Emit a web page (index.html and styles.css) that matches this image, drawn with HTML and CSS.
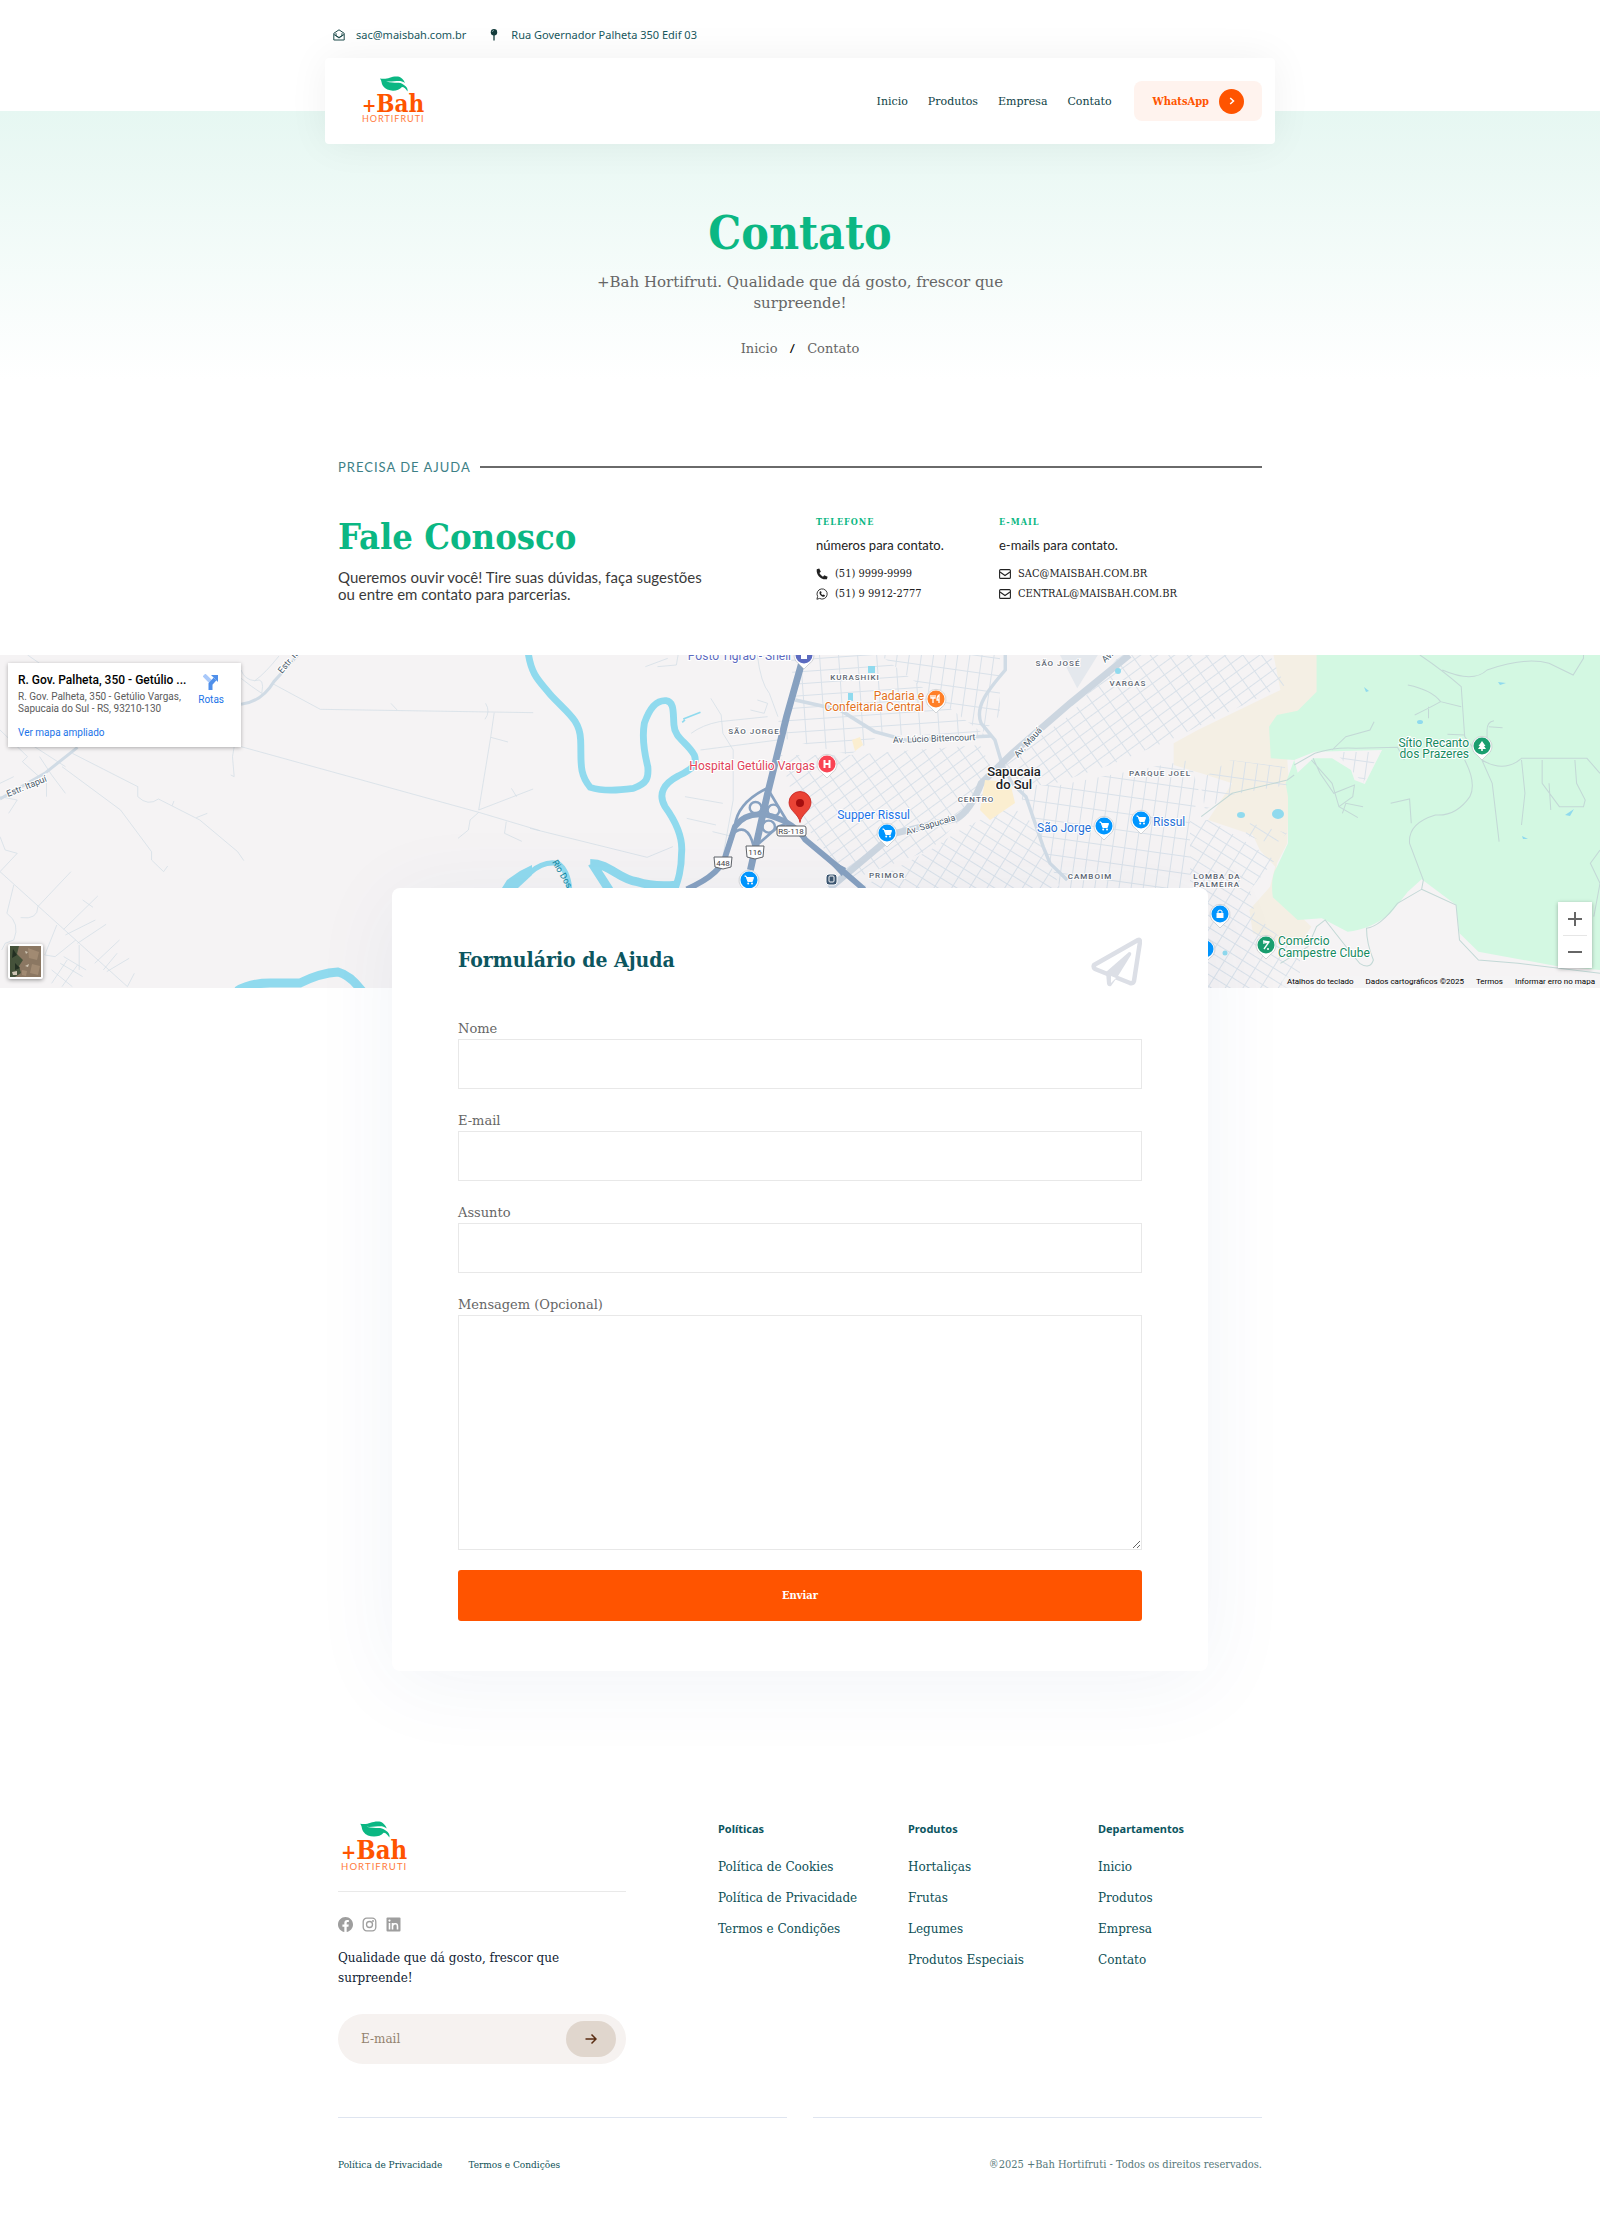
FILE: index.html
```html
<!DOCTYPE html>
<html lang="pt-BR">
<head>
<meta charset="utf-8">
<meta name="viewport" content="width=device-width, initial-scale=1">
<title>Contato | +Bah Hortifruti</title>
<link rel="stylesheet" href="styles.css">
</head>
<body>
<header class="header">
  <div class="topbar">
    <a href="#" class="topitem"><svg width="12" height="12" viewBox="0 0 12 12"><path d="M.8 4.300L6 .8L11.200 4.300V11H.8ZM3 4.200V6.500L6 8.500L9 6.500V4.200M1 5.500L6 9L11 5.500" fill="none" stroke="#1d4a4a"/></svg>sac@maisbah.com.br</a>
    <a href="#" class="topitem pin"><svg width="8" height="12" viewBox="0 0 8 12"><circle cx="4" cy="3.200" r="3.200" fill="#143c3c"/><path d="M4 6V11.500" stroke="#143c3c" stroke-width="1.300"/><path d="M2.200 3A2 2 0 0 1 4 1.400" stroke="#9bb" stroke-width=".7" fill="none"/></svg>Rua Governador Palheta 350 Edif 03</a>
  </div>
  <div class="navbar">
    <a href="#" class="logo" aria-label="+Bah Hortifruti"><svg width="62" height="48" viewBox="0 0 62 48">
      <path d="M18 2.500C26 4 28 0 36 .5C39 1 42 4 43 7C38 3 34 6 24 5.500C34 8 37 5 42 9C45 11 46 13 45.500 15.500C44 13 42 11 40 11C36 16 25 16 21 10C19 7 20 5 18 2.500Z" fill="#0bb783"/>
      <text class="brand" x="0" y="36"><tspan class="plus">+</tspan>Bah</text>
      <text class="brandsub" x="0" y="46">HORTIFRUTI</text></svg></a>
    <nav class="nav">
      <a href="#">Inicio</a><a href="#">Produtos</a><a href="#">Empresa</a><a href="#">Contato</a>
    </nav>
    <a href="#" class="whats">WhatsApp<span class="dot"><svg width="6" height="8" viewBox="0 0 6 8"><path d="M1.200 1L4.500 4L1.200 7" fill="none" stroke="#fff" stroke-width="1.500"/></svg></span></a>
  </div>
</header>

<main>
<section class="hero">
  <h1>Contato</h1>
  <p class="lead">+Bah Hortifruti. Qualidade que dá gosto, frescor que surpreende!</p>
  <nav class="crumbs"><a href="#">Inicio</a><b>/</b><span>Contato</span></nav>
</section>

<section class="contact wrap">
  <div class="eyebrow"><span>PRECISA DE AJUDA</span><i></i></div>
  <div class="contactgrid">
    <div>
      <h2>Fale Conosco</h2>
      <p class="intro">Queremos ouvir você! Tire suas dúvidas, faça sugestões ou entre em contato para parcerias.</p>
    </div>
    <div class="info">
      <h3>TELEFONE</h3>
      <p>números para contato.</p>
      <a href="#"><svg width="12" height="12" viewBox="0 0 16 16"><path fill="#222" d="M1 1.500L4.300 .5L6.500 5L4.500 6.700A11 11 0 0 0 9.300 11.500L11 9.500L15.500 11.700L14.500 15C6 16 0 9 1 1.500Z"/></svg>(51) 9999-9999</a>
      <a href="#"><svg width="12" height="12" viewBox="0 0 16 16"><path d="M1.200 15L2.200 11.300A6.800 6.800 0 1 1 4.800 13.900Z" fill="none" stroke="#222" stroke-width="1.200"/><path fill="#222" d="M5.500 4.300L6.700 4.200L7.500 6.200L6.700 7.200C7.200 8.300 8 9 9 9.400L10 8.500L11.900 9.500C11.800 11.500 10 12 8.200 11.200C6 10.200 3.200 7 5.500 4.300Z"/></svg>(51) 9 9912-2777</a>
    </div>
    <div class="info">
      <h3>E-MAIL</h3>
      <p>e-mails para contato.</p>
      <a href="#"><svg width="12" height="10" viewBox="0 0 12 10" fill="none" stroke="#222" stroke-width="1.100"><rect x=".6" y=".6" width="10.800" height="8.800" rx="1"/><path d="M1 3L6 6.500L11 3"/></svg>SAC@MAISBAH.COM.BR</a>
      <a href="#"><svg width="12" height="10" viewBox="0 0 12 10" fill="none" stroke="#222" stroke-width="1.100"><rect x=".6" y=".6" width="10.800" height="8.800" rx="1"/><path d="M1 3L6 6.500L11 3"/></svg>CENTRAL@MAISBAH.COM.BR</a>
    </div>
  </div>
</section>

<section class="map" aria-label="Mapa">
<svg class="mapart" viewBox="0 0 1600 333" preserveAspectRatio="xMidYMid slice">
  <defs>
    <pattern id="g1" width="15" height="10" patternUnits="userSpaceOnUse" patternTransform="rotate(-36)"><path d="M0 .5H15M.5 0V10" stroke="#d9e1e9"/></pattern>
    <pattern id="g2" width="19" height="12" patternUnits="userSpaceOnUse" patternTransform="rotate(-4)"><path d="M0 .5H19M.5 0V12" stroke="#d9e1e9"/></pattern>
    <pattern id="g3" width="12" height="17" patternUnits="userSpaceOnUse" patternTransform="rotate(8)"><path d="M0 .5H12M.5 0V17" stroke="#d9e1e9"/></pattern>
    <pattern id="g4" width="15" height="10" patternUnits="userSpaceOnUse" patternTransform="rotate(32)"><path d="M0 .5H15M.5 0V10" stroke="#d9e1e9"/></pattern>
    <g id="cart"><path d="M-4.500 -4H-3L-1.200 1.500H3.300L4.500 -2.500H-2.500" fill="#fff" stroke="#fff"/><circle cx="-.8" cy="3.500" r="1" fill="#fff"/><circle cx="3" cy="3.500" r="1" fill="#fff"/></g>
    <path id="drop" d="M0 14L-5 9A10 10 0 1 1 5 9Z" fill="#fff" stroke="#b9bcc0" stroke-width=".6"/>
  </defs>
  <rect width="1600" height="333" fill="#f5f3f4"/>
  <!-- vegetation and open land -->
  <g transform="translate(1060 -5) scale(.3444 .3333)">
    <path d="M620 15H760V130L660 330L665 400L660 580L630 640L620 720L730 830L690 890L560 850L550 780L610 710L625 650L580 600L560 555L430 510L500 400L410 370L330 345V280L400 240L640 120Z" fill="#f4efe4"/>
    <path d="M745 15H1570V960L1440 948L1215 905L1160 850L1150 765L1050 688L1010 725L960 790Q900 840 835 845L760 805L690 810L618 742Q610 680 630 650L662 580V440L655 400L680 330L612 325L607 230L630 195L690 182L745 125Z" fill="#d3f8e2"/>
    <path d="M680 330L740 305L935 300L885 402L855 390L845 360L790 325L735 325L690 368Z" fill="#f5f3f4"/>
    <path d="M0 15H110L50 115Z" fill="#e4e8ed"/>
  </g>
  <!-- street grids -->
  <path d="M790 0H880L985 80L880 80L850 100L770 80L795 40Z" fill="url(#g2)"/>
  <path d="M880 0H1000V60L980 80H985L880 0Z" fill="url(#g3)"/>
  <path d="M780 100L850 100L980 90L1000 130L950 175L930 195L850 225L800 165Z" fill="url(#g1)"/>
  <path d="M1000 110L1070 60L1120 0H1270L1285 30L1170 85L1110 110L1050 130L1015 130Z" fill="url(#g1)"/>
  <path d="M1015 130L1060 130L1110 120L1190 105L1200 140L1190 165V333H1060V233L1035 170Z" fill="url(#g3)"/>
  <path d="M930 195L960 175L1010 150L1035 170L1060 233H860Z" fill="url(#g4)"/>
  <path d="M1200 125L1230 105L1285 112L1287 130L1230 140L1205 155Z" fill="url(#g3)"/>
  <path d="M1190 165L1210 165L1275 205L1250 235L1255 260L1300 300V333H1190Z" fill="url(#g4)"/>
  <path d="M1250 168L1287 178L1275 190L1245 180Z" fill="url(#g4)"/>
  <path d="M1335 97L1380 97L1363 128L1345 108Z" fill="url(#g3)"/>
  <g fill="none" stroke="#d0dbe5" stroke-width="2">
    <g transform="translate(0 -5) scale(.3444 .3333)">
      <path d="M80 15L115 40M790 100L930 178L1548 188M1435 188L1425 260L1390 480L1548 417M700 290L1390 487L1568 542M1390 487L1365 510L1360 540L1330 565M1470 515L1465 550L1515 574M1425 262L1475 276M1410 160Q1425 185 1408 208M1135 160L1153 180M1485 415L1500 440M210 310L400 410V440Q430 470 460 447L580 510L690 605L708 632M500 467L505 453M570 503L602 490M180 350L350 480L440 605V630L475 665L487 648M680 290L675 320L680 380L670 375M700 60Q710 90 740 92Q770 70 810 18M700 85Q730 110 760 130Q770 80 740 92M0 240L60 300L80 320L65 335L135 400V440M85 280L190 350M115 320L150 375L190 430M0 665L370 1010L390 970M110 770L206 665M110 770Q110 810 60 803M40 705L20 790Q60 820 40 870L15 880L5 900M185 838L284 738M240 750L270 772M165 825L130 915L160 920L220 870M190 855L277 810M225 880L308 823M230 885V960M275 940L347 870M300 960L340 910M310 965L375 925M185 920L250 960M175 940L240 980M150 960L210 1010M195 930L150 1000M225 945L180 1010M0 560L15 600L50 610L0 665M0 400L40 380M25 490L50 450L0 440"/>
      <path d="M0 447L130 370L225 292" stroke-width="9"/>
      <path d="M700 163Q760 155 795 95L865 15" stroke-width="9"/>
    </g>
    <g transform="translate(530 -5) scale(.3444 .3333)">
      <path d="M0 535L340 622L415 590M660 15Q670 100 695 130L720 200M468 250Q500 225 550 215L690 200M525 145L555 195L560 250L590 300V450L560 620M495 300L720 270M450 440L560 460M455 505L540 525M530 545L590 560M430 15L425 45L370 50M335 50L400 25M640 180L680 190L690 160L660 150"/>
      <path d="M770 150L900 180L1000 245L1090 270L1340 258" stroke-width="11"/>
      <path d="M1380 15V60C1330 120 1290 170 1310 220L1350 270L1370 340L1400 400L1440 440L1490 590L1510 640L1560 690" stroke-width="10"/>
      <path d="M870 715L1060 550L1240 505Q1280 480 1310 400L1400 310L1568 160L1740 15" stroke="#ccd6e0" stroke-width="20"/>
    </g>
    <g transform="translate(1060 -5) scale(.3444 .3333)" stroke-width="3">
      <path d="M1045 15Q1110 60 1165 110L1175 260L1225 330Q1290 370 1340 325H1530L1568 370M1110 60Q1200 100 1240 60Q1350 20 1420 40L1490 75L1520 25V15M1010 105Q1080 120 1105 155L1165 170M1105 155Q1080 170 1030 195M1070 170L1070 205M1225 330L1255 400L1275 575M1175 330Q1210 400 1190 440Q1150 500 1090 495Q1010 520 1015 580L1055 690L1050 718L980 760Q930 830 890 835Q890 880 910 930Q900 960 870 940Q830 890 770 810L745 830L720 890L640 940M1050 718L1150 765L1160 870L1215 930L1330 940L1568 970M960 460L1015 447L1020 520M1400 330L1400 400L1450 470H1520L1525 450L1500 400L1495 330M1340 330L1350 430L1340 525M1420 400L1425 480M1568 600L1540 640L1568 700L1550 800M1240 310V240Q1240 215 1260 212M1245 230L1285 233M1125 253L1175 255M680 345L740 310Q800 290 860 295L980 292L1000 330M790 300L830 260L900 240L912 215M730 330L790 400L810 470L865 503M735 325L755 370L795 430L855 405L850 440L810 470M820 490L830 460L880 470M410 500L500 430L660 390L680 375" stroke="#c3d8d6"/>
    </g>
  </g>
  <!-- water -->
  <g fill="none" stroke="#90daee" transform="translate(530 -5) scale(.3444 .3333)">
    <path d="M-5 10C5 80 30 95 60 135C110 190 145 210 147 270C150 330 140 370 175 412C215 425 260 420 300 415C340 400 345 385 342 350C330 300 325 260 332 220C345 180 365 150 395 152C420 155 415 190 418 225C420 265 455 275 477 315C490 350 455 365 430 378C390 400 370 430 392 470C420 510 445 560 440 610C440 660 430 690 420 720" stroke-width="20"/>
    <path d="M175 640C230 640 260 690 310 695Q360 712 425 705M180 640L230 720" stroke-width="26"/>
    <path d="M0 668Q40 632 80 640Q110 660 115 720" stroke-width="16"/>
    <path d="M445 207L495 187M442 217L450 210" stroke-width="5"/>
  </g>
  <path d="M502 233L507 225L520 216L532 210V220L518 233Z" fill="#90daee"/>
  <path d="M237 336Q250 328 270 328H300Q320 318 338 317Q350 320 362 336" fill="none" stroke="#90daee" stroke-width="9"/>
  <g fill="#90daee"><ellipse cx="1278" cy="159" rx="6" ry="5"/><ellipse cx="1241" cy="160" rx="4" ry="3"/><ellipse cx="1420" cy="67" rx="3" ry="2"/><path d="M1565 160L1574 154L1570 161ZM1498 27L1506 28L1500 30ZM1364 32L1369 36L1366 37ZM1522 181L1528 184L1523 184Z"/><rect x="868" y="11" width="7" height="7"/><rect x="848" y="38" width="5" height="8"/><circle cx="1225" cy="298" r="2.500"/><circle cx="1118" cy="16" r="3"/></g>
  <path d="M985 125L1010 127L1015 148L990 165L980 155Z M852 85L860 82L863 90L855 96Z" fill="#fbeed0"/>
  <!-- highways -->
  <g fill="none" stroke="#87a1c0" transform="translate(530 -5) scale(.3444 .3333)">
    <path d="M790 35L745 200L690 430L640 660" stroke-width="20"/>
    <path d="M455 718Q560 670 570 610L595 530Q630 480 700 498Q770 520 800 570L905 660L970 718" stroke-width="17"/>
    <path d="M688 415Q600 460 595 530M695 425L750 520L720 530L665 580M585 555Q630 510 650 590" stroke-width="8"/>
    <g stroke-width="7"><circle cx="655" cy="473" r="17"/><circle cx="707" cy="481" r="17"/><circle cx="693" cy="530" r="18"/></g>
    <path d="M860 625L915 655L905 675Z" fill="#87a1c0" stroke-width="4"/>
  </g>
  <!-- route shields -->
  <g fill="#fff" stroke="#5f6368"><rect x="777" y="171" width="29" height="10" rx="2"/><path d="M746 191H764L763 202L755 204L747 202ZM714 202H732L731 212L723 214L715 212Z"/></g>
  <g class="shield"><text x="791" y="179">RS-118</text><text x="755" y="200">116</text><text x="723" y="211">448</text></g>
  <!-- place names -->
  <g class="area">
    <text x="855" y="25">KURASHIKI</text><text x="754" y="79">SÃO JORGE</text><text x="1058" y="11">SÃO JOSÉ</text><text x="1128" y="31">VARGAS</text><text x="1160" y="121">PARQUE JOEL</text><text x="976" y="147">CENTRO</text><text x="887" y="223">PRIMOR</text><text x="1090" y="224">CAMBOIM</text><text x="1217" y="224">LOMBA DA</text><text x="1217" y="232">PALMEIRA</text>
  </g>
  <g class="city"><text x="1014" y="121">Sapucaia</text><text x="1014" y="134">do Sul</text></g>
  <g class="road"><text x="893" y="88" transform="rotate(-2 893 88)">Av. Lúcio Bittencourt</text><text x="907" y="180" transform="rotate(-17 907 180)">Av. Sapucaia</text><text x="1018" y="103" transform="rotate(-48 1018 103)">Av. Mauá</text><text x="1105" y="8" transform="rotate(-42 1105 8)">Av. Mauá</text><text x="8" y="142" transform="rotate(-22 8 142)">Estr. Itapuí</text><text x="282" y="19" transform="rotate(-50 282 19)">Estr. Itapuí</text></g>
  <text class="river" x="552" y="207" transform="rotate(60 552 207)">Rio Dos Sinos</text>
  <!-- points of interest -->
  <g class="poi end">
    <text x="791" y="5" fill="#5c6bc0">Posto Tigrão - Shell</text><text x="924" y="45" fill="#e2711d">Padaria e</text><text x="924" y="56" fill="#e2711d">Confeitaria Central</text><text x="815" y="115" fill="#e0435a">Hospital Getúlio Vargas</text><text x="910" y="164" fill="#1a73e8">Supper Rissul</text><text x="1091" y="177" fill="#1f6fd6">São Jorge</text><text x="1469" y="92" fill="#168a5f">Sítio Recanto</text><text x="1469" y="103" fill="#168a5f">dos Prazeres</text>
  </g>
  <g class="poi"><text x="1153" y="171" fill="#1f6fd6">Rissul</text><text x="1278" y="290" fill="#168a5f">Comércio</text><text x="1278" y="302" fill="#168a5f">Campestre Clube</text></g>
  <g transform="translate(804 0)"><use href="#drop"/><circle r="8.500" fill="#5c6bc0"/><rect x="-3" y="-1" width="6" height="5" fill="#fff"/></g>
  <g transform="translate(936 44)"><use href="#drop"/><circle r="8.500" fill="#ff7f27"/><path d="M-3 -4V4M-5 -4V-1H-1V-4M3 4V-4Q1 -3 1 1H3" fill="none" stroke="#fff" stroke-width="1.300"/></g>
  <g transform="translate(827 109)"><use href="#drop"/><circle r="8.500" fill="#fa4454"/><path d="M-2.500 -4V4M2.500 -4V4M-2.500 0H2.500" stroke="#fff" stroke-width="2"/></g>
  <g fill="#0096ff">
    <g transform="translate(887 178)"><use href="#drop"/><circle r="8.500"/><use href="#cart"/></g>
    <g transform="translate(749 225)"><use href="#drop"/><circle r="8.500"/><use href="#cart"/></g>
    <g transform="translate(1104 171)"><use href="#drop"/><circle r="8.500"/><use href="#cart"/></g>
    <g transform="translate(1141 165)"><use href="#drop"/><circle r="8.500"/><use href="#cart"/></g>
    <g transform="translate(1205 294)"><use href="#drop"/><circle r="8.500"/></g>
    <g transform="translate(1220 259)"><use href="#drop"/><circle r="8.500"/><path d="M-3.500 -1H3.500V4H-3.500Z" fill="#fff"/><path d="M-2 -1V-3Q0 -5 2 -3V-1" fill="none" stroke="#fff"/></g>
  </g>
  <g transform="translate(1482 91)" fill="#1a9e6f"><use href="#drop"/><circle r="8.500"/><path d="M0 -5L3.500 0H2L4 3H.8V5H-.8V3H-4L-2 0H-3.500Z" fill="#fff"/></g>
  <g transform="translate(1266 290)" fill="#1a9e6f"><use href="#drop"/><circle r="8.500"/><path d="M-3 -4L3 -3L-2 4M-3 -2L3 -3" fill="none" stroke="#fff" stroke-width="1.300"/><circle cx="2" cy="4" r="1" fill="#fff"/></g>
  <rect x="826" y="219" width="11" height="11" rx="3" fill="#3d5670" stroke="#fff"/><rect x="829" y="221" width="5" height="6" rx="1" fill="none" stroke="#fff"/>
  <path d="M800 167.500C799 159 789 156 789 147.500A11 11 0 0 1 811 147.500C811 156 801 159 800 167.500Z" fill="#ea4335" stroke="#c5221f" stroke-width=".8"/><circle cx="800" cy="148" r="4" fill="#a50e0e"/>
</svg>
  <div class="place">
    <div class="placetext"><strong>R. Gov. Palheta, 350 - Getúlio ...</strong><p>R. Gov. Palheta, 350 - Getúlio Vargas, Sapucaia do Sul - RS, 93210-130</p><a href="#">Ver mapa ampliado</a></div>
    <a href="#" class="route"><svg width="16" height="16" viewBox="0 0 16 16"><path d="M1 1L8 8" stroke="#a9c9fa" stroke-width="4"/><path d="M7.500 16V10L12 5" fill="none" stroke="#4f8fea" stroke-width="4"/><path d="M8 1H15V8Z" fill="#4f8fea"/></svg>Rotas</a>
  </div>
  <button class="sat" aria-label="Satélite"><svg width="31" height="31" viewBox="0 0 31 31"><rect width="31" height="31" fill="#8b7762"/><path d="M0 0H9L7 8L13 14L9 20L11 27L5 31H0Z" fill="#45523a"/><path d="M3 3L7 9L2 12ZM5 17L10 22L5 24Z" fill="#232f22"/><path d="M2 26L7 25V29H3ZM15 20L19 18L18 21ZM15 5L18 6L16 8Z" fill="#cfc5b4"/><path d="M18 2L29 6L27 14L19 12ZM22 18L30 20L28 29L20 27ZM12 24L17 25L16 30L12 29Z" fill="#a18a72"/></svg></button>
  <div class="zoom"><button aria-label="Aumentar"><svg width="14" height="14"><path d="M0 7H14M7 0V14" stroke="#666" stroke-width="2"/></svg></button><button aria-label="Diminuir"><svg width="14" height="14"><path d="M0 7H14" stroke="#666" stroke-width="2"/></svg></button></div>
  <div class="legal"><a href="#">Atalhos do teclado</a><span>Dados cartográficos ©2025</span><a href="#">Termos</a><a href="#">Informar erro no mapa</a></div>
</section>

<form class="card">
  <div class="cardhead"><h2>Formulário de Ajuda</h2><svg width="51" height="51" viewBox="0 0 51 51"><path d="M47 3L3 28Q2 30 4 32L39 46Q42 47 43 44L49 5Q49 2 47 3Z" fill="none" stroke="#dcdfe6" stroke-width="4.500" stroke-linejoin="round"/><path d="M15 35L38 15Q41 15 40 18L27 39L20 49Q17 50 16 47Z" fill="#dcdfe6"/><path d="M20 39L25 41L20 46Z" fill="#fff"/></svg></div>
  <div class="field"><label for="nome">Nome</label><input id="nome" type="text"></div>
  <div class="field"><label for="email">E-mail</label><input id="email" type="email"></div>
  <div class="field"><label for="assunto">Assunto</label><input id="assunto" type="text"></div>
  <div class="field"><label for="msg">Mensagem (Opcional)</label><textarea id="msg"></textarea></div>
  <button class="send" type="button">Enviar</button>
</form>
</main>

<footer class="footer wrap">
  <div class="footgrid">
    <div class="about">
      <a href="#" class="footlogo" aria-label="+Bah Hortifruti"><svg width="66" height="51" viewBox="0 0 62 48">
        <path d="M18 2.500C26 4 28 0 36 .5C39 1 42 4 43 7C38 3 34 6 24 5.500C34 8 37 5 42 9C45 11 46 13 45.500 15.500C44 13 42 11 40 11C36 16 25 16 21 10C19 7 20 5 18 2.500Z" fill="#0bb783"/>
        <text class="brand" x="0" y="36"><tspan class="plus">+</tspan>Bah</text>
        <text class="brandsub" x="0" y="46">HORTIFRUTI</text></svg></a>
      <div class="social">
        <a href="#" aria-label="Facebook"><svg width="15" height="15" viewBox="0 0 16 16"><path fill="#9e9e9e" d="M16 8.050C16 3.600 12.400 0 8 0S0 3.600 0 8.050C0 12.070 2.930 15.400 6.750 16V10.380H4.720V8.050H6.750V6.280C6.750 4.260 7.950 3.140 9.770 3.140C10.650 3.140 11.560 3.300 11.560 3.300V5.280H10.550C9.560 5.280 9.250 5.900 9.250 6.540V8.050H11.470L11.120 10.380H9.250V16C13.070 15.400 16 12.070 16 8.050"/></svg></a>
        <a href="#" aria-label="Instagram"><svg width="15" height="15" viewBox="0 0 15 15" fill="none" stroke="#9e9e9e" stroke-width="1.300"><rect x="1.200" y="1.200" width="12.600" height="12.600" rx="3.500"/><circle cx="7.500" cy="7.500" r="3"/><circle cx="11" cy="4" r=".4"/></svg></a>
        <a href="#" aria-label="LinkedIn"><svg width="15" height="15" viewBox="0 0 15 15"><rect x=".5" y=".5" width="14" height="14" rx="1" fill="#9e9e9e"/><path d="M3.500 6V12.500M6.500 12.500V6M6.500 9Q7 6.500 9.300 6.700Q11.500 6.500 11.500 9.500V12.500" fill="none" stroke="#fff" stroke-width="1.600"/><circle cx="3.500" cy="3.600" r="1.100" fill="#fff"/></svg></a>
      </div>
      <p class="slogan">Qualidade que dá gosto, frescor que surpreende!</p>
      <form class="news"><input type="email" placeholder="E-mail" aria-label="E-mail"><button type="button" aria-label="Assinar"><svg width="12" height="12" viewBox="0 0 12 12"><path d="M.5 6H11M6.500 1.500L11 6L6.500 10.500" fill="none" stroke="#5a2d12" stroke-width="1.500"/></svg></button></form>
    </div>
    <div class="links"><h3>Políticas</h3><a href="#">Política de Cookies</a><a href="#">Política de Privacidade</a><a href="#">Termos e Condições</a></div>
    <div class="links"><h3>Produtos</h3><a href="#">Hortaliças</a><a href="#">Frutas</a><a href="#">Legumes</a><a href="#">Produtos Especiais</a></div>
    <div class="links"><h3>Departamentos</h3><a href="#">Inicio</a><a href="#">Produtos</a><a href="#">Empresa</a><a href="#">Contato</a></div>
  </div>
  <div class="bottom">
    <div><a href="#">Política de Privacidade</a><a href="#">Termos e Condições</a></div>
    <p>®2025 +Bah Hortifruti - Todos os direitos reservados.</p>
  </div>
</footer>
</body>
</html>
```
FILE: styles.css
```css
* { box-sizing: border-box; margin: 0; padding: 0; }
body { font-family: "DejaVu Serif", serif; background: #fff; color: #666; }
h1, h2, h3, .info a, .whats, .send, .brand, .bottom p { font-family: "DejaVu Serif Condensed", "DejaVu Serif", serif; }
a { color: inherit; text-decoration: none; }
svg { display: block; flex: none; }
button { border: 0; cursor: pointer; }
.wrap { max-width: 956px; margin: 0 auto; padding: 0 16px; }

.brand { font-size: 24px; font-weight: 700; fill: #ff5400; }
.plus { font-size: 19px; }
.brandsub { font: 9px Lato, sans-serif; letter-spacing: 1px; fill: #ff7a3c; }
.logo svg, .footlogo svg { overflow: visible; }

.header { max-width: 950px; margin: 0 auto; position: relative; z-index: 2; }
.topbar { display: flex; gap: 24px; padding: 25px 8px 13px; font: 11px/20px "Noto Sans", sans-serif; color: #17565c; }
.topitem { display: flex; align-items: center; gap: 11px; }
.topitem.pin { gap: 13px; }
.navbar { display: flex; align-items: center; min-height: 86px; padding: 0 13px 0 37px; background: #fff; border-radius: 4px; box-shadow: 0 0 40px rgba(0, 0, 0, .06); }
.logo { margin-right: auto; padding-bottom: 3px; }
.nav { display: flex; gap: 20px; margin-right: 22px; font-size: 11px; color: #0e3f46; }
.whats { display: flex; align-items: center; gap: 10px; height: 40px; padding: 0 18px 0 19px; border-radius: 8px; background: #fff3ee; color: #ff5400; font-size: 11px; font-weight: 700; }
.dot { display: flex; align-items: center; justify-content: center; width: 25px; height: 25px; border-radius: 50%; background: #ff5400; }

.hero { margin-top: -33px; padding: 94px 16px 32px; background: linear-gradient(#e6f7f2, #fff 96%); text-align: center; }
h1 { font-size: 46px; line-height: 56px; color: #0bb783; }
.lead { max-width: 430px; margin: 11px auto 0; font-size: 15px; line-height: 21px; }
.crumbs { display: flex; justify-content: center; gap: 12px; margin-top: 25px; font-size: 13px; line-height: 20px; }
.crumbs b { font: 700 12px/20px Lato, sans-serif; color: #000; }

.contact { padding-top: 66px; padding-bottom: 51px; }
.eyebrow { display: flex; align-items: center; gap: 9px; font: 13px/20px Lato, sans-serif; letter-spacing: 1px; color: #3d8086; }
.eyebrow i { flex: 1; height: 2px; background: #6a6a6a; }
.contactgrid { display: grid; grid-template-columns: 478px 183px 1fr; margin-top: 37px; }
.contact h2 { font-size: 36px; line-height: 44px; color: #0bb783; }
.intro { max-width: 380px; margin-top: 11px; font: 15px/17px Lato, sans-serif; color: #3a3a3a; }
.info h3 { font-size: 9px; line-height: 16px; letter-spacing: 1px; color: #0bb783; }
.info p { margin: 5px 0 9px; font: 13px/20px Lato, sans-serif; color: #222; }
.info a { display: flex; align-items: center; gap: 7px; font-size: 11px; line-height: 20px; color: #222; }

.map { position: relative; height: 333px; overflow: hidden; font-family: Roboto, sans-serif; }
.mapart { width: 100%; height: 100%; }
.mapart text { paint-order: stroke; stroke: #fff; stroke-width: 2px; font-family: Roboto, sans-serif; }
.area { font-size: 8px; font-weight: 500; letter-spacing: 1px; fill: #5b6470; text-anchor: middle; }
.city { font-size: 13px; font-weight: 500; fill: #202124; text-anchor: middle; }
.road { font-size: 9px; fill: #4a5a6a; }
.river { font-size: 9px; fill: #1287a0; }
.mapart .river { stroke: none; }
.poi { font-size: 12px; }
.end { text-anchor: end; }
.shield { font-size: 8px; fill: #444; text-anchor: middle; }
.mapart .shield text { stroke: none; }
.place { position: absolute; left: 8px; top: 8px; display: flex; justify-content: space-between; width: 233px; height: 84px; padding: 9px 17px 8px 10px; background: #fff; box-shadow: 0 1px 4px rgba(0, 0, 0, .3); font-size: 10px; line-height: 12px; color: #5b5b5b; }
.placetext { width: 166px; }
.place strong { display: block; font-size: 12px; font-weight: 500; line-height: 16px; color: #000; white-space: nowrap; }
.place p { margin: 3px 0 12px; }
.place a { color: #1a73e8; }
.route { display: flex; flex-direction: column; align-items: center; gap: 4px; padding-top: 2px; }
.sat { position: absolute; left: 8px; bottom: 9px; padding: 2px; background: #fff; border-radius: 2px; box-shadow: 0 1px 4px rgba(0, 0, 0, .4); }
.zoom { position: absolute; right: 8px; bottom: 20px; width: 34px; padding: 0 5px; background: #fff; box-shadow: 0 1px 4px rgba(0, 0, 0, .3); }
.zoom button { display: flex; align-items: center; justify-content: center; width: 24px; height: 33px; background: none; }
.zoom button + button { border-top: 1px solid #e6e6e6; }
.legal { position: absolute; right: 0; bottom: 0; display: flex; gap: 12px; padding: 0 5px; background: rgba(245, 245, 245, .6); font-size: 8px; line-height: 12px; color: #000; }

.card { position: relative; max-width: 816px; margin: -100px auto 0; padding: 49px 66px 50px; background: #fff; border-radius: 8px; box-shadow: 0 10px 90px rgba(30, 60, 140, .06); }
.cardhead { display: flex; justify-content: space-between; margin-bottom: 31px; }
.cardhead h2 { font-size: 21px; line-height: 46px; color: #0c565f; }
.field { margin-bottom: 22px; }
.field label { display: block; font-size: 13px; line-height: 20px; }
.field input, .field textarea { display: block; width: 100%; height: 50px; padding: 0 16px; border: 1px solid #e8e8e8; background: #fff; font: inherit; }
.field textarea { height: 235px; resize: vertical; }
.send { width: 100%; height: 51px; margin-top: -2px; border-radius: 3px; background: #ff5400; color: #fff; font-size: 11px; font-weight: 700; }

.footer { padding-top: 148px; padding-bottom: 43px; }
.footgrid { display: grid; grid-template-columns: 380px 190px 190px 1fr; }
.about { width: 288px; }
.footlogo { display: block; padding: 2px 3px 19px; border-bottom: 1px solid #e9e9e9; }
.social { display: flex; gap: 9px; margin: 25px 0 16px; }
.slogan { max-width: 250px; font-size: 12px; line-height: 20px; color: #0f2233; }
.news { display: flex; align-items: center; height: 50px; margin-top: 26px; padding-right: 10px; border-radius: 25px; background: #f6f2f0; }
.news input { flex: 1; min-width: 0; height: 50px; padding-left: 23px; border: 0; background: none; font: 12px "DejaVu Serif", serif; }
.news input::placeholder { color: #93826f; }
.news button { display: flex; align-items: center; justify-content: center; width: 50px; height: 36px; border-radius: 18px; background: #e0d6cd; }
.links { display: flex; flex-direction: column; }
.links h3 { margin-bottom: 13px; font: 700 11px/20px "Noto Sans", sans-serif; color: #0c565f; }
.links a { font-size: 12px; line-height: 31px; color: #0c4f56; white-space: nowrap; }
.bottom { display: grid; grid-template-columns: 1fr 1fr; column-gap: 26px; margin-top: 53px; }
.bottom > * { padding-top: 37px; border-top: 1px solid #dfe5f0; line-height: 20px; }
.bottom div { display: flex; gap: 26px; font-size: 9px; color: #0c4f56; }
.bottom p { font-size: 11px; color: #56797b; text-align: right; white-space: nowrap; }
```
